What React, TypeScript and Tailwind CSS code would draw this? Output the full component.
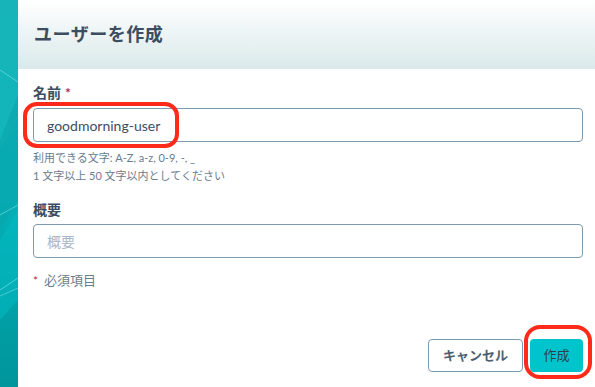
import React from 'react'

const font = { fontFamily: 'Lato, "Noto Sans CJK JP", sans-serif' }

const SideStrip = () => (
  <div className="relative w-[18px] shrink-0 overflow-hidden bg-gradient-to-b from-[#12b0b5] via-[#04b2b9] to-[#00959b]">
    <svg className="absolute inset-0" width="18" height="387" viewBox="0 0 18 387">
      <polygon points="0,0 18,0 18,120 0,150" fill="#1bb9be" opacity="0.5" />
      <polygon points="0,140 18,95 18,200 0,230" fill="#0aa5ab" opacity="0.6" />
      <polygon points="0,240 18,210 18,300 0,320" fill="#04bcc3" opacity="0.5" />
      <line x1="0" y1="70" x2="18" y2="82" stroke="#7fe3e6" strokeWidth="0.6" />
      <line x1="0" y1="215" x2="18" y2="205" stroke="#7fe3e6" strokeWidth="0.6" />
      <line x1="0" y1="290" x2="18" y2="278" stroke="#8ae8ea" strokeWidth="0.6" />
      <line x1="0" y1="296" x2="18" y2="288" stroke="#8ae8ea" strokeWidth="0.5" />
    </svg>
  </div>
)

const Required = () => <span className="ml-1 text-[#b2343a]">*</span>

export default function App() {
  return (
    <div className="flex h-[387px] w-[595px] overflow-hidden bg-white" style={font}>
      <SideStrip />
      <div className="relative flex flex-1 flex-col">
        <div className="flex h-[69px] items-center bg-gradient-to-b from-white to-[#dae9ea] pl-[16px]">
          <h1 className="text-[18px] font-bold tracking-[0.5px] text-[#3c4d61]">ユーザーを作成</h1>
        </div>

        <div className="flex flex-col pl-[15px] pr-[12px] pt-[15px]">
          <label className="text-[14px] font-bold leading-[18px] text-[#3c4d61]">
            名前
            <Required />
          </label>
          <div className="relative mt-[6px]">
            <div className="flex h-[34px] items-center rounded-[4px] border border-[#7d9bb0] px-[13px] text-[14px] text-[#3c4d61]">
              goodmorning-user
            </div>
            <div className="pointer-events-none absolute left-[-10px] top-[-6px] h-[46px] w-[156px] rounded-[14px] border-[4px] border-[#ff2a1a]" />
          </div>
          <p className="mt-[7px] text-[11px] leading-[18px] text-[#6b7c8c]">利用できる文字: A-Z, a-z, 0-9, -, _</p>
          <p className="text-[11px] leading-[18px] text-[#6b7c8c]">1 文字以上 50 文字以内としてください</p>

          <label className="mt-[16px] text-[14px] font-bold leading-[18px] text-[#3c4d61]">概要</label>
          <div className="mt-[5px] flex h-[34px] items-center rounded-[4px] border border-[#7d9bb0] px-[13px] text-[14px] text-[#a7b7c5]">
            概要
          </div>

          <p className="mt-[13px] flex items-center text-[13px] text-[#6b7c8c]">
            <span className="mr-[6px] text-[12px] text-[#b2343a]">*</span>
            必須項目
          </p>
        </div>

        <div className="mt-auto flex justify-end gap-[7px] pb-[15px] pr-[12px]">
          <button className="h-[33px] w-[95px] rounded-[4px] border border-[#7d9bb0] bg-white text-[13px] font-bold text-[#4d5e70]">
            キャンセル
          </button>
          <div className="relative">
            <button className="h-[33px] w-[53px] rounded-[4px] bg-[#00c4cc] text-[13px] text-[#2c3e50]">作成</button>
            <div className="pointer-events-none absolute left-[-6px] top-[-14px] h-[54px] w-[68px] rounded-[16px] border-[4px] border-[#ff2a1a]" />
          </div>
        </div>
      </div>
    </div>
  )
}
